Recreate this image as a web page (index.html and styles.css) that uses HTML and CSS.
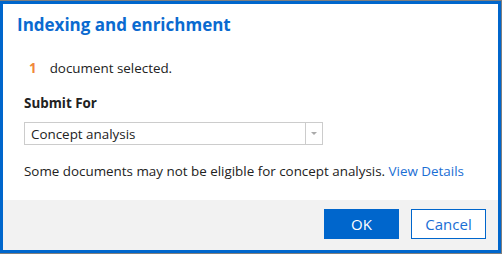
FILE: index.html
```html
<!DOCTYPE html>
<html lang="en">
<head>
    <meta charset="UTF-8">
    <meta name="viewport" content="width=device-width, initial-scale=1.0">
    <title>Indexing and enrichment</title>
    <link rel="stylesheet" href="styles.css">
</head>
<body>
    <div class="frame">
        <div class="dialog">
            <div class="dialog-body">
                <h1 class="dialog-title">Indexing and enrichment</h1>
                <div class="selection">
                    <span class="count">1</span>
                    <span>document selected.</span>
                </div>
                <div class="field-label">Submit For</div>
                <div class="select">
                    <span class="select-value">Concept analysis</span>
                    <span class="select-arrow"></span>
                </div>
                <p class="note">Some documents may not be eligible for concept analysis. <a href="#" class="link">View Details</a></p>
            </div>
            <div class="dialog-footer">
                <button class="btn btn-primary">OK</button>
                <button class="btn btn-secondary">Cancel</button>
            </div>
        </div>
    </div>
</body>
</html>
```

FILE: styles.css
```css
body {
    margin: 0;
    width: 502px;
    height: 254px;
    font-family: "Open Sans", sans-serif;
    font-size: 13.4px;
    color: #222;
}

.frame {
    height: 254px;
    box-sizing: border-box;
    border-top: 1px solid #7f7f7f;
    border-right: 1px solid #7f7f7f;
    border-bottom: 1px solid #7f7f7f;
}

.dialog {
    height: 100%;
    box-sizing: border-box;
    border: 3px solid #0066cc;
    display: flex;
    flex-direction: column;
}

.dialog-body {
    flex: 1;
    background-color: #fff;
    padding: 0 0 0 21px;
}

.dialog-title {
    margin: 9px 0 0 -7px;
    font-size: 17px;
    font-weight: 700;
    color: #0a6ad0;
    line-height: 24px;
}

.selection {
    margin-top: 22px;
    display: flex;
    gap: 13px;
    padding-left: 5px;
    line-height: 18px;
}

.count {
    color: #f0883a;
    font-weight: 700;
}

.field-label {
    margin-top: 17px;
    font-weight: 700;
    line-height: 18px;
}

.select {
    margin-top: 10px;
    width: 299px;
    height: 23px;
    box-sizing: border-box;
    border: 1px solid #ccc;
    display: flex;
    align-items: center;
}

.select-value {
    flex: 1;
    padding-left: 6px;
}

.select-arrow {
    width: 16px;
    height: 100%;
    border-left: 1px solid #ccc;
    position: relative;
}

.select-arrow::after {
    content: "";
    position: absolute;
    left: 5px;
    top: 9px;
    border-left: 3px solid transparent;
    border-right: 3px solid transparent;
    border-top: 3px solid #aaa;
}

.note {
    margin: 17px 0 0;
    line-height: 18px;
}

.link {
    color: #1a6ed4;
    text-decoration: none;
}

.dialog-footer {
    height: 50px;
    background-color: #f2f2f2;
    display: flex;
    justify-content: flex-end;
    align-items: flex-start;
    gap: 12px;
    padding: 9px 12px 0 0;
    box-sizing: border-box;
}

.btn {
    width: 75px;
    height: 30px;
    font-family: "Open Sans", sans-serif;
    font-size: 15px;
    cursor: pointer;
}

.btn-primary {
    background-color: #0066cc;
    border: 1px solid #0066cc;
    color: #fff;
}

.btn-secondary {
    background-color: #fff;
    border: 1px solid #0066cc;
    color: #1a6ed4;
}
```
